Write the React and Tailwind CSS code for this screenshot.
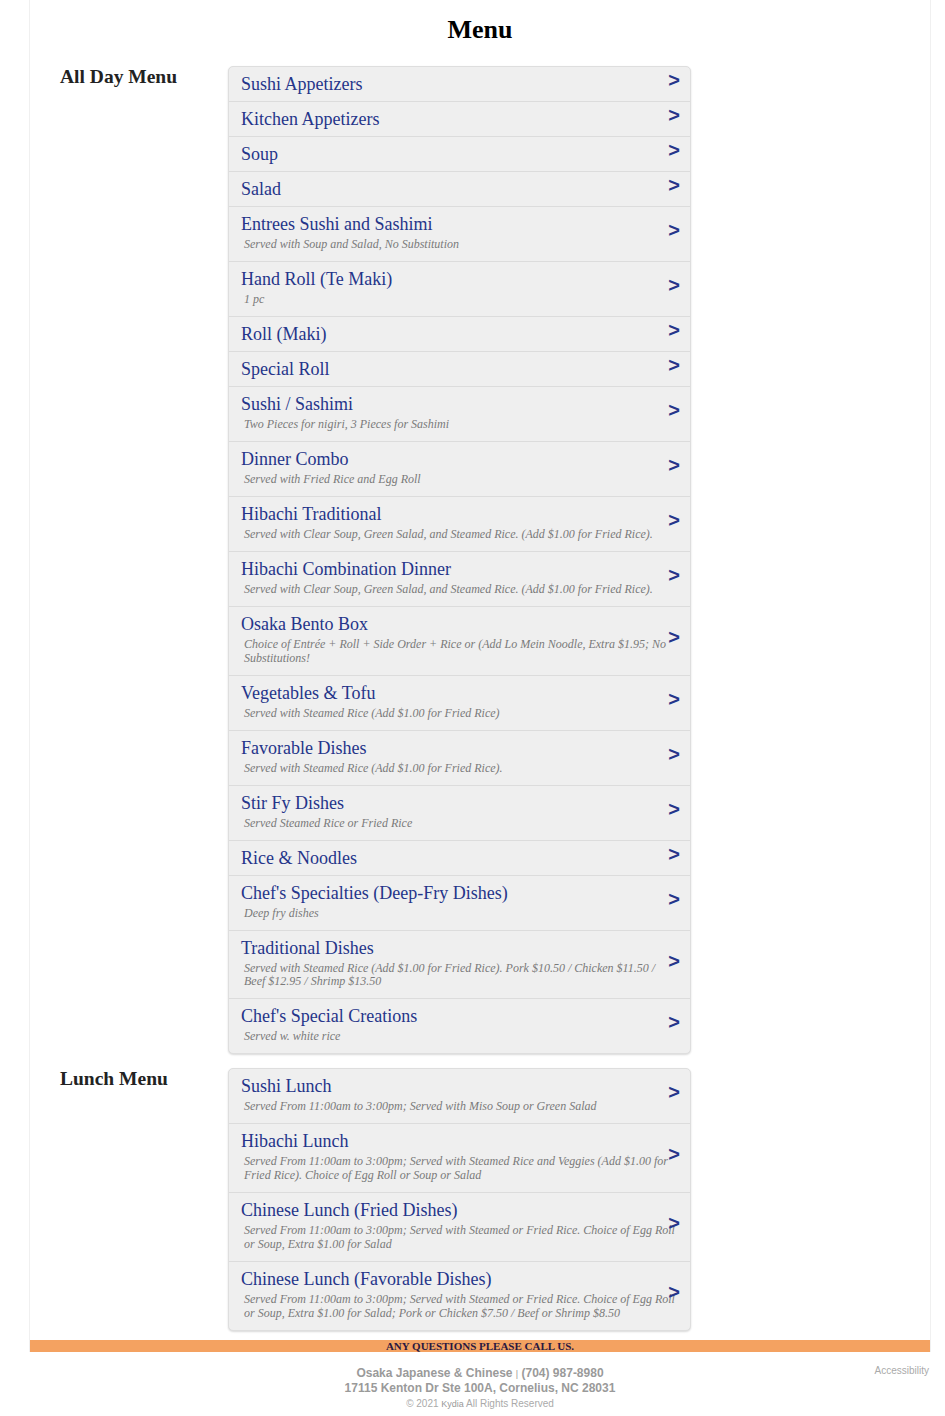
const allDay = [
  { title: 'Sushi Appetizers' },
  { title: 'Kitchen Appetizers' },
  { title: 'Soup' },
  { title: 'Salad' },
  { title: 'Entrees Sushi and Sashimi', note: 'Served with Soup and Salad, No Substitution' },
  { title: 'Hand Roll (Te Maki)', note: '1 pc' },
  { title: 'Roll (Maki)' },
  { title: 'Special Roll' },
  { title: 'Sushi / Sashimi', note: 'Two Pieces for nigiri, 3 Pieces for Sashimi' },
  { title: 'Dinner Combo', note: 'Served with Fried Rice and Egg Roll' },
  { title: 'Hibachi Traditional', note: 'Served with Clear Soup, Green Salad, and Steamed Rice. (Add $1.00 for Fried Rice).' },
  { title: 'Hibachi Combination Dinner', note: 'Served with Clear Soup, Green Salad, and Steamed Rice. (Add $1.00 for Fried Rice).' },
  { title: 'Osaka Bento Box', note: 'Choice of Entrée + Roll + Side Order + Rice or (Add Lo Mein Noodle, Extra $1.95; No Substitutions!' },
  { title: 'Vegetables & Tofu', note: 'Served with Steamed Rice (Add $1.00 for Fried Rice)' },
  { title: 'Favorable Dishes', note: 'Served with Steamed Rice (Add $1.00 for Fried Rice).' },
  { title: 'Stir Fy Dishes', note: 'Served Steamed Rice or Fried Rice' },
  { title: 'Rice & Noodles' },
  { title: "Chef's Specialties (Deep-Fry Dishes)", note: 'Deep fry dishes' },
  { title: 'Traditional Dishes', note: 'Served with Steamed Rice (Add $1.00 for Fried Rice). Pork $10.50 / Chicken $11.50 / Beef $12.95 / Shrimp $13.50' },
  { title: "Chef's Special Creations", note: 'Served w. white rice' },
];

const lunch = [
  { title: 'Sushi Lunch', note: 'Served From 11:00am to 3:00pm; Served with Miso Soup or Green Salad' },
  { title: 'Hibachi Lunch', note: 'Served From 11:00am to 3:00pm; Served with Steamed Rice and Veggies (Add $1.00 for Fried Rice). Choice of Egg Roll or Soup or Salad' },
  { title: 'Chinese Lunch (Fried Dishes)', note: 'Served From 11:00am to 3:00pm; Served with Steamed or Fried Rice. Choice of Egg Roll or Soup, Extra $1.00 for Salad' },
  { title: 'Chinese Lunch (Favorable Dishes)', note: 'Served From 11:00am to 3:00pm; Served with Steamed or Fried Rice. Choice of Egg Roll or Soup, Extra $1.00 for Salad; Pork or Chicken $7.50 / Beef or Shrimp $8.50' },
];

function MenuRow({ item }) {
  return (
    <a href="#" className="relative block border-b border-[#dcdcdc] last:border-b-0 pl-3 pr-[12px] py-[7px]">
      <div className="text-[18px] leading-[20px] text-[#25358a]">{item.title}</div>
      {item.note ? (
        <div className="mt-[4px] mb-[2.2px] pl-[3px] text-[12px] leading-[13.8px] italic text-[#7a7a7a]">{item.note}</div>
      ) : null}
      <span className="absolute right-[10px] top-1/2 -mt-[4px] -translate-y-1/2 font-['Liberation_Sans',Arial,sans-serif] text-[20px] font-bold leading-[20px] text-[#25358a]">
        &gt;
      </span>
    </a>
  );
}

function Section({ label, items }) {
  return (
    <div className="flex items-start">
      <h2 className="w-[168px] text-[19.5px] font-bold leading-[22px] text-[#222]">{label}</h2>
      <div className="w-[463px] overflow-hidden rounded-[5px] border border-[#dedede] bg-[#efefef] shadow-[0_1px_2px_rgba(0,0,0,0.15)]">
        {items.map((item) => (
          <MenuRow key={item.title} item={item} />
        ))}
      </div>
    </div>
  );
}

export default function App() {
  return (
    <div className="bg-white font-['Liberation_Serif','Times_New_Roman',serif]">
      <div className="ml-[29px] mr-[14px] border-x border-[#f0f0f0]">
        <h1 className="pt-[15px] text-center text-[26px] font-bold leading-[30px] text-black">Menu</h1>
        <div className="mt-[21px] flex flex-col gap-[14px] pl-[30px]">
          <Section label="All Day Menu" items={allDay} />
          <Section label="Lunch Menu" items={lunch} />
        </div>
        <div className="mt-[9px] bg-[#f4a261] text-center text-[11px] font-bold leading-[12px] text-[#2a1840]">
          ANY QUESTIONS PLEASE CALL US.
        </div>
      </div>
      <footer className="relative ml-[29px] mr-[14px] pt-[14px] pb-[4px] text-center font-['Liberation_Sans',Arial,sans-serif] text-[#9a9a9a]">
        <a href="#" className="absolute right-[2px] top-[13px] text-[10px] leading-[12px] text-[#aaa]">Accessibility</a>
        <div className="text-[12px] font-bold leading-[14px]">
          Osaka Japanese &amp; Chinese <span className="font-normal text-[9px]">|</span> (704) 987-8980
        </div>
        <div className="text-[12px] font-bold leading-[14px]">17115 Kenton Dr Ste 100A, Cornelius, NC 28031</div>
        <div className="mt-[2px] text-[10px] leading-[14px] text-[#aaa]">
          © 2021 <span className="align-top text-[9px] text-[#999]">Kydia</span> All Rights Reserved
        </div>
      </footer>
    </div>
  );
}
